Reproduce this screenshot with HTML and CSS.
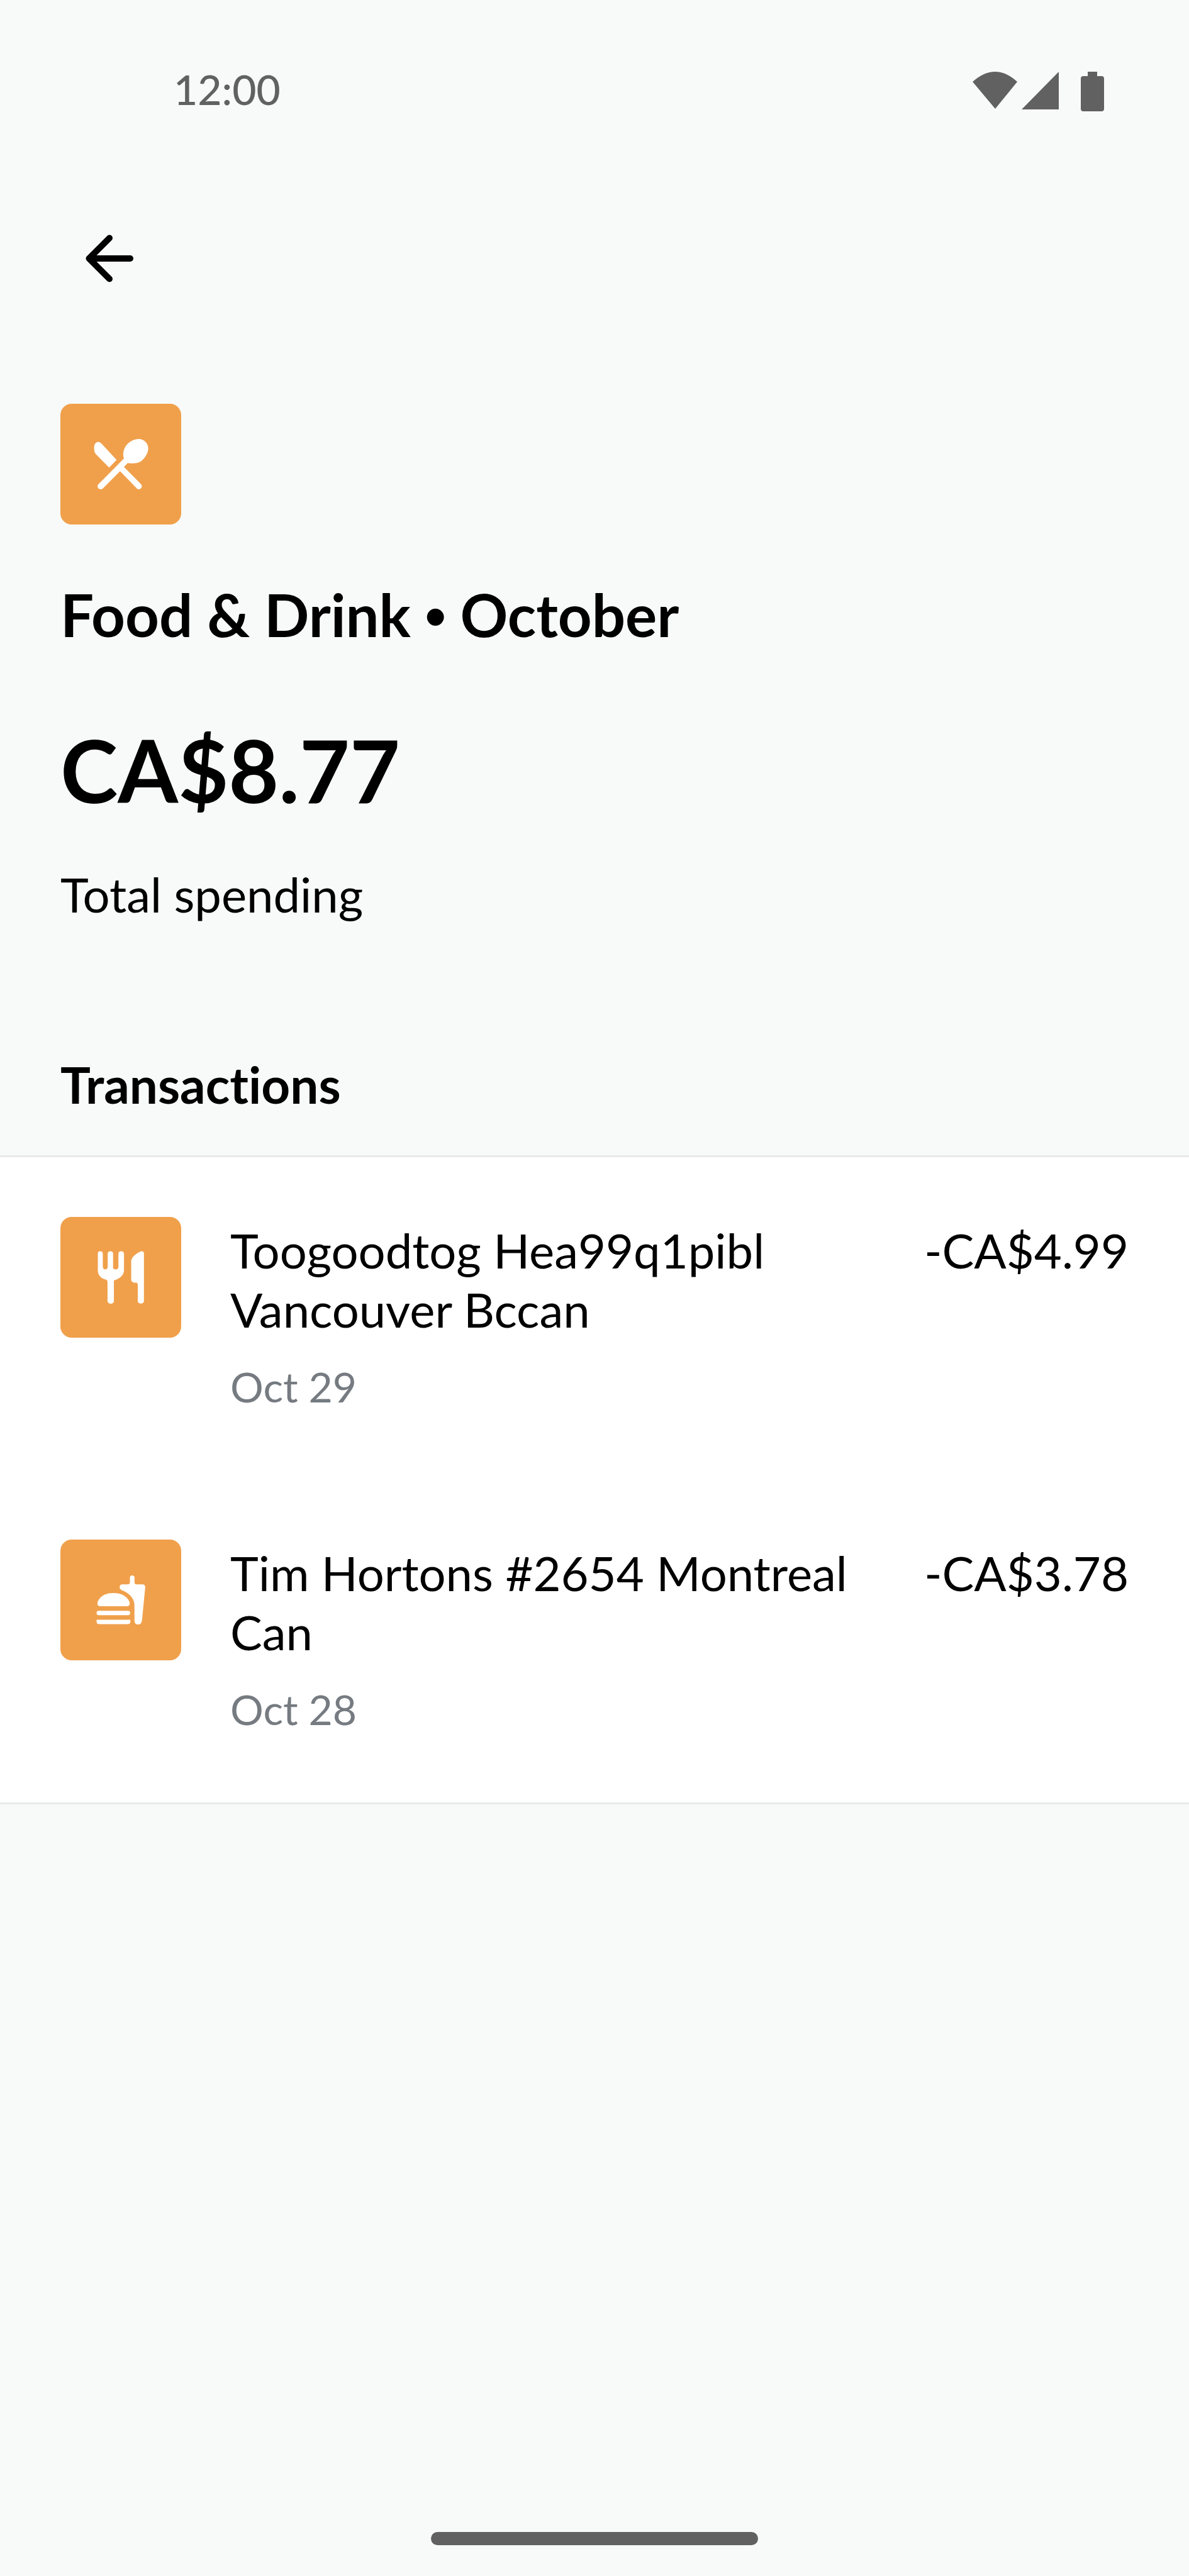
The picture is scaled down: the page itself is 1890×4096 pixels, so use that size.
FILE: index.html
```html
<!DOCTYPE html>
<html lang="en">
<head>
<meta charset="utf-8">
<title>Food &amp; Drink</title>
<link rel="stylesheet" href="styles.css">
</head>
<body>
<div class="status-bar">
    <span class="clock">12:00</span>
    <svg class="status-icons" viewBox="0 0 210 80" aria-hidden="true">
        <path d="M0 28 Q36 -4 71 28 L36 71 Z"/>
        <path d="M137 12 V72 H78 Z"/>
        <path d="M183 12 H198 V19 H205 Q209 19 209 23 V71 Q209 75 205 75 H176 Q172 75 172 71 V23 Q172 19 176 19 H183 Z"/>
    </svg>
</div>

<header class="header">
    <button class="back" type="button" aria-label="Back">
        <svg class="back-icon" viewBox="0 0 76 76" aria-hidden="true">
            <path d="M38 5.500 L5.500 38 L38 70.500 M7 38 H71"/>
        </svg>
    </button>
</header>

<main>
    <section class="summary">
        <div class="tile">
            <svg viewBox="53 67 587 587" aria-hidden="true">
                <path d="M217 285C216 268 222 254 236 253C244 252 249 257 254 262L326 340L290 377L231 318C219 307 217 296 217 285Z"/>
                <path d="M362 333C355 318 358 290 372 270C388 250 412 238 434 238C460 238 480 260 480 285C479 310 462 332 447 345C430 358 405 358 380 355L362 374L445 458C456 472 442 488 427 481L343 395L260 478C246 490 228 477 236 460Z"/>
            </svg>
        </div>
        <h1 class="category">Food &amp; Drink <span class="bullet">•</span> October</h1>
        <p class="total">CA$8.77</p>
        <p class="total-label">Total spending</p>
    </section>

    <h2 class="section-title">Transactions</h2>
    <ul class="transactions">
        <li class="transaction">
            <div class="tile">
                <svg viewBox="53 63 587 587" aria-hidden="true">
                    <path d="M235 240C235 226 258 226 259 240V305C260 322 282 322 283 305V240C285 226 308 226 309 240V312C320 324 335 318 335 305V240C337 226 360 226 362 240V325C360 347 340 364 313 372V473C312 489 284 489 282 473V378C280 368 275 369 268 366C247 358 235 342 235 325Z"/>
                    <path d="M397 275C403 255 422 240 446 230C454 230 459 233 459 240V473C459 488 429 488 429 473V395C429 386 426 382 418 383C405 383 397 376 397 368Z"/>
                </svg>
            </div>
            <div class="details">
                <p class="merchant">Toogoodtog Hea99q1pibl Vancouver Bccan</p>
                <p class="date">Oct 29</p>
            </div>
            <p class="amount">-CA$4.99</p>
        </li>
        <li class="transaction">
            <div class="tile">
                <svg viewBox="53 67 587 587" aria-hidden="true">
                    <path d="M233 375C240 345 270 327 311 327C350 327 382 345 390 375C390 385 386 391 380 391H243C237 391 232 385 233 375Z"/>
                    <rect x="229" y="413" width="163" height="22" rx="10"/>
                    <path d="M229 457H393V467Q393 478 382 478H240Q229 478 229 467Z"/>
                    <path d="M341 297C342 290 346 285 353 285H375C387 285 391 282 391 270V250C391 238 413 238 413 250V272C413 281 416 285 426 285H452C462 285 466 291 465 302L450 455C449 470 443 480 431 480C420 480 413 474 413 460V385C411 350 385 325 350 312C343 309 340 304 341 297Z"/>
                </svg>
            </div>
            <div class="details">
                <p class="merchant">Tim Hortons #2654 Montreal Can</p>
                <p class="date">Oct 28</p>
            </div>
            <p class="amount">-CA$3.78</p>
        </li>
    </ul>
</main>

<div class="home-indicator"></div>
</body>
</html>
```
FILE: styles.css
```css
* {
    box-sizing: border-box;
}

body {
    display: flex;
    flex-direction: column;
    min-height: 100vh;
    margin: 0;
    background-color: #f8faf9;
    color: #000;
    font-family: Lato, sans-serif;
    font-size: 76px;
    line-height: 94px;
    font-variant-ligatures: none;
}

h1, h2, p, ul {
    margin: 0;
    padding: 0;
}

.status-bar {
    display: flex;
    justify-content: space-between;
    padding: 102px 134px 0 276px;
    color: #616161;
}

.clock {
    font-size: 66px;
    line-height: 80px;
    font-weight: 500;
}

.status-icons {
    width: 210px;
    height: 80px;
    fill: #616161;
}

.header {
    padding: 151px 96px 0;
}

.back {
    display: flex;
    align-items: center;
    justify-content: center;
    width: 156px;
    height: 156px;
    padding: 0;
    border: none;
    background: none;
    cursor: pointer;
}

.back-icon {
    width: 76px;
    height: 76px;
    fill: none;
    stroke: #000;
    stroke-width: 10;
    stroke-linecap: round;
    stroke-linejoin: round;
}

.summary {
    padding: 153px 96px 0;
}

.tile {
    flex: none;
    width: 192px;
    height: 192px;
    border-radius: 18px;
    background-color: #f0a04b;
}

.tile svg {
    display: block;
    fill: #fff;
}

.category {
    margin-top: 87px;
    font-size: 94px;
    line-height: 112px;
    font-weight: 700;
}

.bullet {
    font-family: "Liberation Sans", sans-serif;
    line-height: 1;
}

.total {
    margin-top: 103px;
    font-size: 138px;
    line-height: 176px;
    font-weight: 700;
}

.total-label {
    margin-top: 63px;
}

.section-title {
    padding: 208px 96px 66px;
    font-size: 80px;
    font-weight: 700;
}

.transactions {
    list-style: none;
    border-top: 3px solid #e8eaea;
    border-bottom: 3px solid #e8eaea;
    background-color: #fff;
}

.transaction {
    display: flex;
    padding: 95px 96px 108px;
}

.details {
    flex: 1;
    padding: 6px 78px 0;
}

.date {
    margin-top: 36px;
    color: #757b80;
    font-size: 66px;
    line-height: 80px;
}

.amount {
    padding-top: 6px;
    white-space: nowrap;
}

.home-indicator {
    width: 520px;
    height: 21px;
    margin: auto auto 49px;
    border-radius: 11px;
    background-color: #616161;
}
```
